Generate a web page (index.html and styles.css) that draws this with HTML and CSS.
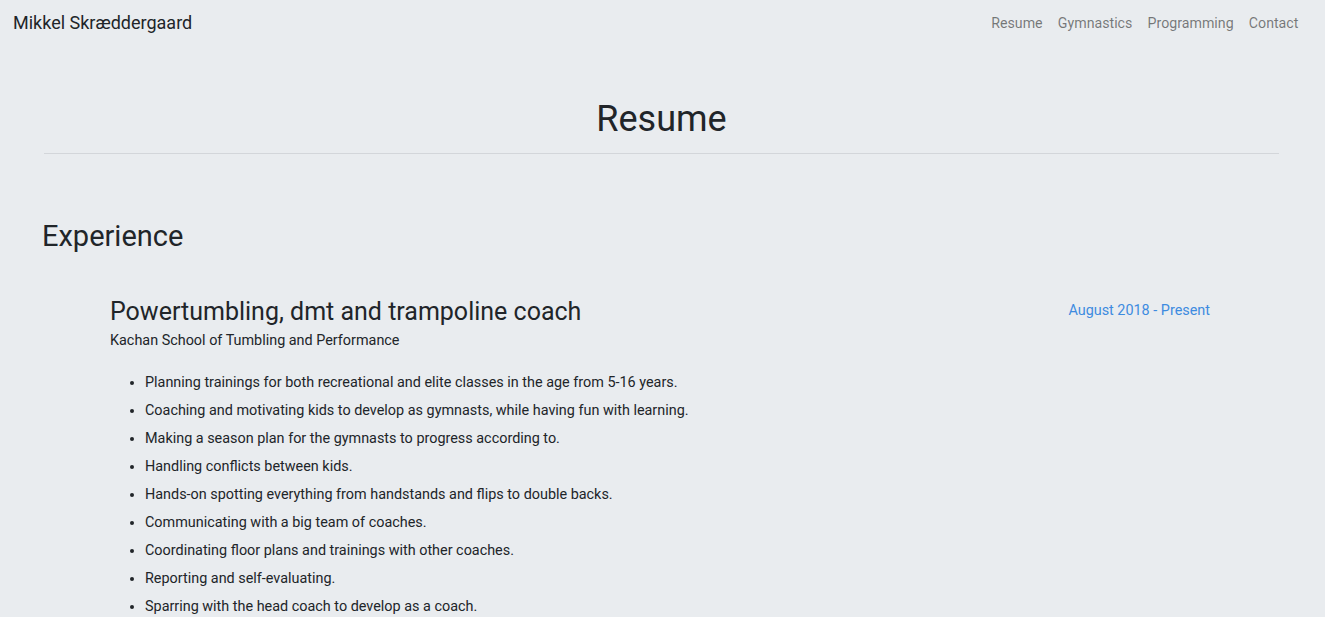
FILE: index.html
```html
<!DOCTYPE html>
<html>
<head>
<meta charset="utf-8">
<link rel="stylesheet" href="styles.css">
</head>
<body>
<nav class="navbar">
  <a class="brand">Mikkel Skræddergaard</a>
  <ul class="nav-links">
    <li><a>Resume</a></li>
    <li><a>Gymnastics</a></li>
    <li><a>Programming</a></li>
    <li><a>Contact</a></li>
  </ul>
</nav>
<main class="container">
  <header class="page-header">
    <h1>Resume</h1>
  </header>
  <section class="section">
    <h2>Experience</h2>
    <article class="job">
      <div class="job-head">
        <div>
          <h3>Powertumbling, dmt and trampoline coach</h3>
          <div class="company">Kachan School of Tumbling and Performance</div>
        </div>
        <div class="date">August 2018 - Present</div>
      </div>
      <ul class="duties">
        <li>Planning trainings for both recreational and elite classes in the age from 5-16 years.</li>
        <li>Coaching and motivating kids to develop as gymnasts, while having fun with learning.</li>
        <li>Making a season plan for the gymnasts to progress according to.</li>
        <li>Handling conflicts between kids.</li>
        <li>Hands-on spotting everything from handstands and flips to double backs.</li>
        <li>Communicating with a big team of coaches.</li>
        <li>Coordinating floor plans and trainings with other coaches.</li>
        <li>Reporting and self-evaluating.</li>
        <li>Sparring with the head coach to develop as a coach.</li>
      </ul>
    </article>
  </section>
</main>
</body>
</html>
```
FILE: styles.css
```css
* { box-sizing: border-box; }
html, body {
  margin: 0;
  background: #e9ecef;
  font-family: Roboto, "Liberation Sans", sans-serif;
  color: #212529;
  font-size: 14px;
}
.navbar {
  display: flex;
  align-items: center;
  justify-content: space-between;
  padding: 8px 19px 8px 13px;
  height: 46px;
}
.brand {
  font-size: 18px;
  color: #212529;
  line-height: 28px;
}
.nav-links {
  display: flex;
  list-style: none;
  margin: 0;
  padding: 0;
}
.nav-links a {
  display: block;
  padding: 8px 7.6px;
  font-size: 14.2px;
  color: rgba(0,0,0,0.5);
}
.container {
  padding: 0 46px 0 42px;
}
.page-header {
  margin: 0 0 0 2px;
  padding: 51px 0 12px;
  border-bottom: 1px solid #d3d6da;
  text-align: center;
}
.page-header h1 {
  margin: 0;
  font-weight: 400;
  font-size: 36px;
  line-height: 44px;
}
.section h2 {
  margin: 64px 0 0;
  font-weight: 400;
  font-size: 29px;
  line-height: 36px;
}
.job {
  padding: 43px 69px 0 68px;
}
.job-head {
  display: flex;
  justify-content: space-between;
  align-items: flex-start;
}
.job h3 {
  margin: 0;
  font-weight: 400;
  font-size: 25px;
  line-height: 30px;
}
.company {
  margin-top: 4px;
  font-size: 14.4px;
  line-height: 20px;
}
.date {
  color: #3d8be0;
  font-size: 14.4px;
  line-height: 20px;
  padding-top: 4px;
}
.duties {
  margin: 22px 0 0;
  padding-left: 35px;
}
.duties li {
  font-size: 14.4px;
  line-height: 20px;
  margin-bottom: 8px;
}
```
